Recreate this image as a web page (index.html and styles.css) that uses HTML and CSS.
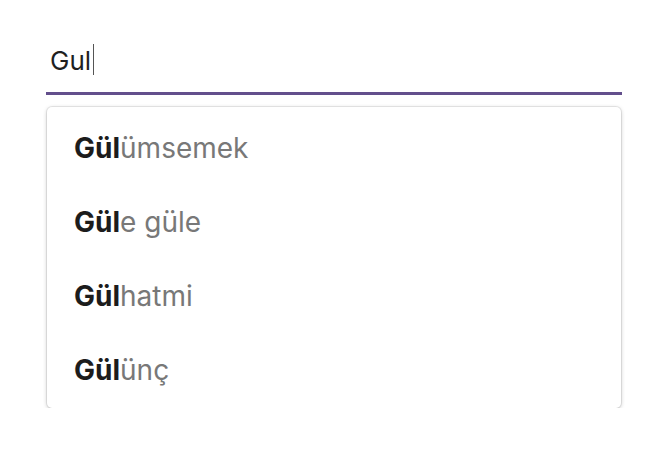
FILE: index.html
```html
<!DOCTYPE html>
<html lang="tr">
<head>
<meta charset="utf-8">
<link rel="stylesheet" href="styles.css">
</head>
<body>
<div class="wrap">
  <div class="field">
    <span class="value">Gul</span><span class="caret"></span>
  </div>
  <ul class="menu">
    <li class="item"><b>Gül</b>ümsemek</li>
    <li class="item"><b>Gül</b>e güle</li>
    <li class="item"><b>Gül</b>hatmi</li>
    <li class="item"><b>Gül</b>ünç</li>
  </ul>
</div>
</body>
</html>
```
FILE: styles.css
```css
html, body {
  margin: 0;
  padding: 0;
  background: #ffffff;
}
body {
  font-family: Inter, "Noto Sans", sans-serif;
}
.wrap {
  width: 576px;
  margin-left: 46px;
  padding-top: 36px;
}
.field {
  height: 56px;
  display: flex;
  align-items: flex-start;
  padding-left: 4px;
  border-bottom: 3px solid #634f8c;
  font-size: 26px;
  line-height: 32px;
  color: #1f1f1f;
}
.value {
  margin-top: 9px;
}
.caret {
  width: 1px;
  height: 31px;
  margin-top: 8px;
  margin-left: 2px;
  background: #555555;
}
.menu {
  list-style: none;
  margin: 12px 1px 0;
  padding: 4px 0 1px;
  background: #fff;
  border-radius: 5px;
  box-shadow: 0 0 0 1px rgba(0,0,0,0.07), 0 1px 4px rgba(0,0,0,0.22);
}
.item {
  height: 74px;
  box-sizing: border-box;
  padding: 20px 0 0 27px;
  font-size: 28px;
  line-height: 34px;
  color: #787878;
}
.item b {
  font-weight: 700;
  color: #1c1c1c;
}
```
